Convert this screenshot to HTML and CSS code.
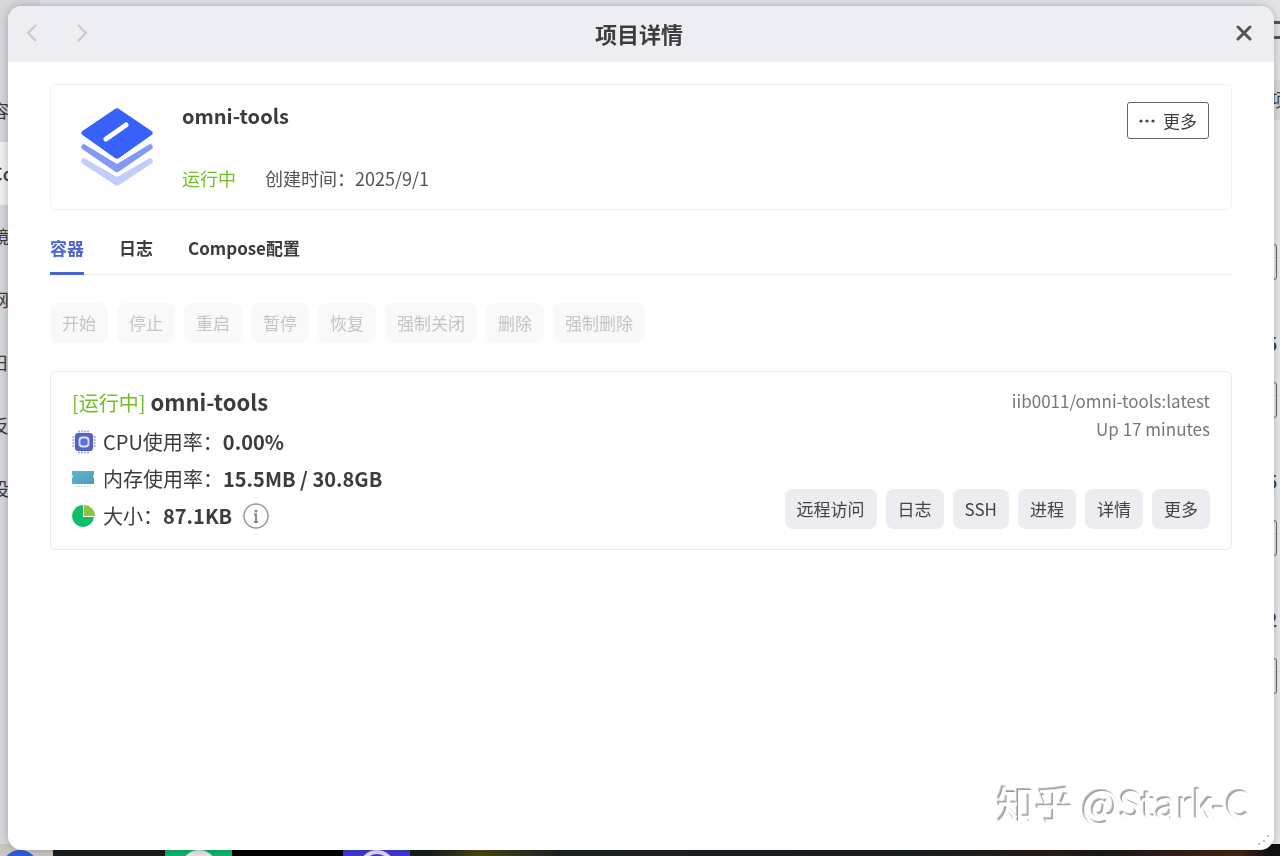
FILE: index.html
```html
<!DOCTYPE html>
<html lang="zh-CN">
<head>
  <meta charset="UTF-8" />
  <meta name="viewport" content="width=device-width, initial-scale=1.0"/>
  <title>项目详情</title>
  <link rel="stylesheet" href="styles.css">
</head>
<body>

  <!-- Desktop behind the window -->
  <div class="desktop" aria-hidden="true">
    <div class="dock">
      <span class="dock-light"><i class="dock-blue"></i></span>
      <span class="dock-dark"></span>
      <span class="dock-green"><i></i></span>
      <span class="dock-black"></span>
      <span class="dock-purple"><i></i></span>
    </div>
    <div class="back-window">
      <ul class="back-menu">
        <li>容</li>
        <li class="current">Co</li>
        <li>镜</li>
        <li>网</li>
        <li>日</li>
        <li>反</li>
        <li>设</li>
      </ul>
      <div class="back-list">
        <div class="back-max"></div>
        <div class="back-head">项</div>
        <div class="back-row"><b>.</b><span></span></div>
        <div class="back-row"><b>5</b><span></span></div>
        <div class="back-row"><b>5</b><span></span></div>
        <div class="back-row"><b>2</b><span></span></div>
      </div>
    </div>
  </div>

  <div class="window">
    <header class="title-bar">
      <nav class="history">
        <button aria-label="后退" disabled>
          <svg width="12" height="20" viewBox="0 0 12 20"><path d="M10 2 2 10l8 8"/></svg>
        </button>
        <button aria-label="前进" disabled>
          <svg width="12" height="20" viewBox="0 0 12 20"><path d="m2 2 8 8-8 8"/></svg>
        </button>
      </nav>
      <h1>项目详情</h1>
      <button class="close" aria-label="关闭">
        <svg width="16" height="16" viewBox="0 0 16 16"><path d="m2 2 12 12M14 2 2 14"/></svg>
      </button>
    </header>

    <main class="content">
      <section class="project">
        <svg class="logo" width="72" height="78" viewBox="0 0 72 78">
          <path fill="#c3cdfb" d="M3 50 36 69l33-19c2 0 3.500 3 2.500 5L38 77q-2 1.500-4 0L.5 55c-1-2 .5-5 2.500-5z"/>
          <path fill="#8299f8" d="M3 36 36 56l33-20c2 0 3.500 2.500 2.500 4.500L38 63.500q-2 1.500-4 0L.5 40.500C-.5 38.500 1 36 3 36z"/>
          <path fill="#3860fb" d="M34 1q2-1.500 4 0l32.500 22q2.500 2 0 4L38 50q-2 1.500-4 0L1.500 27q-2.500-2 0-4z"/>
          <path stroke="#fff" stroke-width="5" stroke-linecap="round" d="m25 31 20-14"/>
        </svg>
        <div class="project-info">
          <h2>omni-tools</h2>
          <p><span class="running">运行中</span><span>创建时间：2025/9/1</span></p>
        </div>
        <button class="more">
          <svg width="16" height="4" viewBox="0 0 16 4"><circle cx="2" cy="2" r="1.600"/><circle cx="8" cy="2" r="1.600"/><circle cx="14" cy="2" r="1.600"/></svg>
          更多
        </button>
      </section>

      <nav class="tabs">
        <a class="active" href="#containers">容器</a>
        <a href="#logs">日志</a>
        <a href="#compose">Compose配置</a>
      </nav>

      <div class="buttons toolbar">
        <button disabled>开始</button>
        <button disabled>停止</button>
        <button disabled>重启</button>
        <button disabled>暂停</button>
        <button disabled>恢复</button>
        <button disabled>强制关闭</button>
        <button disabled>删除</button>
        <button disabled>强制删除</button>
      </div>

      <section class="container" id="containers">
        <div class="stats">
          <h3><span class="running">[运行中]</span> omni-tools</h3>
          <p>
            <svg width="24" height="24" viewBox="0 0 24 24">
              <path stroke="#a9b0f5" stroke-width="2" stroke-dasharray="2 1" d="M6 1.500h12M6 22.500h12M1.500 6v12M22.500 6v12"/>
              <rect x="3" y="3" width="18" height="18" rx="3" fill="#5664c0"/>
              <rect x="7.500" y="7.500" width="9" height="9" rx="3" fill="#5b6fe0" stroke="#dbe4ff" stroke-width="1.800"/>
            </svg>
            CPU使用率：<b>0.00%</b>
          </p>
          <p>
            <svg width="24" height="24" viewBox="0 0 24 24">
              <defs><linearGradient id="ram" x2="1" y2="1"><stop stop-color="#63b8cf"/><stop offset="1" stop-color="#4a9cb5"/></linearGradient></defs>
              <path fill="url(#ram)" d="M0 4h22v4q-2 1.500 0 3v6H0v-6q2-1.500 0-3z"/>
              <path stroke="#b5dbe4" stroke-width="1" stroke-dasharray="2 1" d="M3 19.500h16"/>
            </svg>
            内存使用率：<b>15.5MB / 30.8GB</b>
          </p>
          <p>
            <svg width="24" height="24" viewBox="0 0 24 24">
              <path fill="#10bd6b" d="M11 1v12h11A11 11 0 1 1 11 1z"/>
              <path fill="#8fc43e" d="M12 1a11 11 0 0 1 11 11H12z"/>
            </svg>
            大小：<b>87.1KB</b>
            <svg class="info" width="26" height="26" viewBox="0 0 26 26">
              <circle cx="13" cy="13" r="12" stroke="#999" stroke-width="1.500"/>
              <circle cx="13" cy="8" r="1.500" fill="#888"/>
              <path stroke="#888" stroke-width="2" d="M11 11.500h2V19M11 19h4"/>
            </svg>
          </p>
        </div>
        <div class="side">
          <p>iib0011/omni-tools:latest<br>Up 17 minutes</p>
          <div class="buttons">
            <button>远程访问</button>
            <button>日志</button>
            <button>SSH</button>
            <button>进程</button>
            <button>详情</button>
            <button>更多</button>
          </div>
        </div>
      </section>
    </main>

    <div class="watermark">知乎 @Stark-C</div>
    <svg class="resize" width="12" height="12" viewBox="0 0 12 12"><circle cx="10" cy="2" r="1"/><circle cx="6" cy="7" r="1"/><circle cx="1" cy="10" r="1"/></svg>
  </div>

</body>
</html>
```
FILE: styles.css
```css
* {
  box-sizing: border-box;
}

body {
  display: flex;
  min-height: 100vh;
  margin: 0;
  padding: 6px 6px 6px 8px;
  font-family: "Noto Sans CJK SC", sans-serif;
  font-size: 18px;
  line-height: 28px;
  color: #3c3c3c;
}

h1, h2, h3, p, ul {
  margin: 0;
  padding: 0;
  list-style: none;
}

button {
  font: inherit;
  color: inherit;
  border: none;
  background: none;
  padding: 0;
  cursor: pointer;
}

svg {
  fill: none;
  flex: none;
}

/* Desktop */
.desktop {
  position: fixed;
  inset: 0;
  overflow: hidden;
  background: #17191a;
}

.dock {
  position: absolute;
  left: 0;
  right: 0;
  bottom: 0;
  height: 12px;
  display: flex;
  background: linear-gradient(90deg, #17201f 430px, #4a4613 480px, #1b2423 560px, #172022 900px, #2a1d17 1060px, #1a1a18 1100px, #4a2413 1240px, #111 1270px);
}

.dock span {
  position: relative;
  width: 67px;
  overflow: hidden;
}

.dock i {
  position: absolute;
  left: 16px;
  top: 6px;
  width: 36px;
  height: 36px;
  border-radius: 50%;
}

.dock .dock-light { width: 53px; background: #c9c6c2; }
.dock .dock-dark { width: 112px; background: #191c1c; }
.dock .dock-black { width: 111px; background: #000; }
.dock-green { background: #0fb56d; }
.dock-purple { background: #4339d3; }
.dock .dock-blue { left: 2px; background: #2d5be0; }
.dock-green i { background: #e3e8e6; }
.dock-purple i { border: 4px solid #e3e0f5; }

.back-window {
  position: absolute;
  inset: 0 0 12px;
  display: flex;
  justify-content: space-between;
  background: #e3e4e9;
}

.back-menu {
  width: 40px;
  padding-top: 79px;
  background: #d6d6dd;
  font-size: 18px;
}

.back-menu li {
  height: 63px;
  line-height: 63px;
  text-indent: -9px;
}

.back-menu .current {
  background: #f1f1f3;
  font-weight: 500;
}

.back-list {
  width: 10px;
  background: #e9e9eb;
  line-height: 20px;
}

.back-max {
  height: 80px;
  padding-top: 21px;
  background: #e3e4e9;
}

.back-max::before {
  content: "";
  display: block;
  width: 9px;
  height: 12px;
  border: 3px solid #555;
}

.back-head {
  height: 40px;
  line-height: 38px;
  background: #d9d9db;
}

.back-row {
  height: 138px;
  padding-top: 75px;
  border-bottom: 1px solid #d9d9db;
}

.back-row span {
  display: block;
  width: 7px;
  height: 36px;
  margin-top: 29px;
  border: 1px solid #666;
  border-radius: 3px;
}

.back-row b {
  display: block;
  font-weight: 500;
  text-indent: -3px;
}

/* Window */
.window {
  position: relative;
  flex: 1;
  background: #fff;
  border-radius: 14px;
  box-shadow: 0 0 10px rgba(0, 0, 0, 0.25);
  overflow: hidden;
}

.title-bar {
  display: grid;
  grid-template-columns: 1fr auto 1fr;
  align-items: center;
  height: 56px;
  padding: 0 22px 2px 18px;
  background: #edeef3;
}

.title-bar h1 {
  font-size: 22px;
  font-weight: 700;
}

.title-bar path {
  stroke: #c8c8cc;
  stroke-width: 2;
}

.title-bar button {
  display: flex;
}

.history {
  display: flex;
  gap: 38px;
}

.close {
  justify-self: end;
}

.title-bar .close path {
  stroke: #555;
  stroke-width: 3;
  stroke-linecap: round;
}

.content {
  padding: 22px 42px;
}

.project {
  display: flex;
  align-items: flex-start;
  padding: 17px 22px 17px 30px;
  border: 1px solid #f0f0f1;
  border-radius: 6px;
}

.logo {
  margin-top: 6px;
}

.project-info {
  flex: 1;
  display: flex;
  flex-direction: column;
  gap: 34px;
  margin-left: 29px;
}

.project h2 {
  font-size: 20px;
  font-weight: 700;
}

.project p {
  display: flex;
  gap: 29px;
  color: #555;
}

.project .running,
.running {
  color: #73bd27;
}

.more {
  display: flex;
  align-items: center;
  gap: 8px;
  height: 37px;
  padding: 0 11px;
  font-size: 17px;
  border: 1px solid #666;
  border-radius: 3px;
}

.more svg {
  fill: #444;
}

.tabs {
  display: flex;
  gap: 35px;
  margin-top: 21px;
  border-bottom: 1px solid #eee;
}

.tabs a {
  padding: 3px 0 10px;
  margin-bottom: -1px;
  font-size: 17px;
  font-weight: 700;
  color: #3c3c3c;
  text-decoration: none;
  border-bottom: 3px solid transparent;
}

.tabs .active {
  color: #4a62d8;
  border-color: #4a62d8;
}

.buttons {
  display: flex;
  gap: 9px;
}

.buttons button {
  height: 40px;
  padding: 0 12px;
  font-size: 17px;
  background: #ececf1;
  border-radius: 8px;
}

.toolbar {
  margin: 28px 0;
}

.toolbar button {
  color: #c4c4c6;
  background: #f9f9fa;
  cursor: default;
}

.container {
  display: flex;
  justify-content: space-between;
  padding: 9px 21px 15px;
  border: 1px solid #e8e8ea;
  border-radius: 6px;
}

.stats {
  font-size: 20px;
}

.stats h3 {
  font-size: 22px;
  font-weight: 700;
  line-height: 40px;
}

.stats h3 .running {
  font-size: 20px;
  font-weight: 400;
}

.stats p {
  display: flex;
  align-items: center;
  height: 37px;
}

.stats p svg {
  margin-right: 7px;
}

.stats b {
  font-weight: 700;
}

.stats .info {
  margin-left: 11px;
}

.side {
  display: flex;
  flex-direction: column;
  justify-content: space-between;
  align-items: flex-end;
  padding: 6px 0 5px;
  color: #444;
}

.side p {
  font-size: 17px;
  text-align: right;
  color: #777;
}

.watermark {
  position: absolute;
  right: 24px;
  bottom: 22px;
  font-size: 38px;
  font-weight: 500;
  line-height: 50px;
  color: #fff;
  text-shadow: -1px -1px 1px #999, -2px -2px 1px #bbb;
}

.resize {
  position: absolute;
  right: 4px;
  bottom: 4px;
  fill: #aaa;
}
```
